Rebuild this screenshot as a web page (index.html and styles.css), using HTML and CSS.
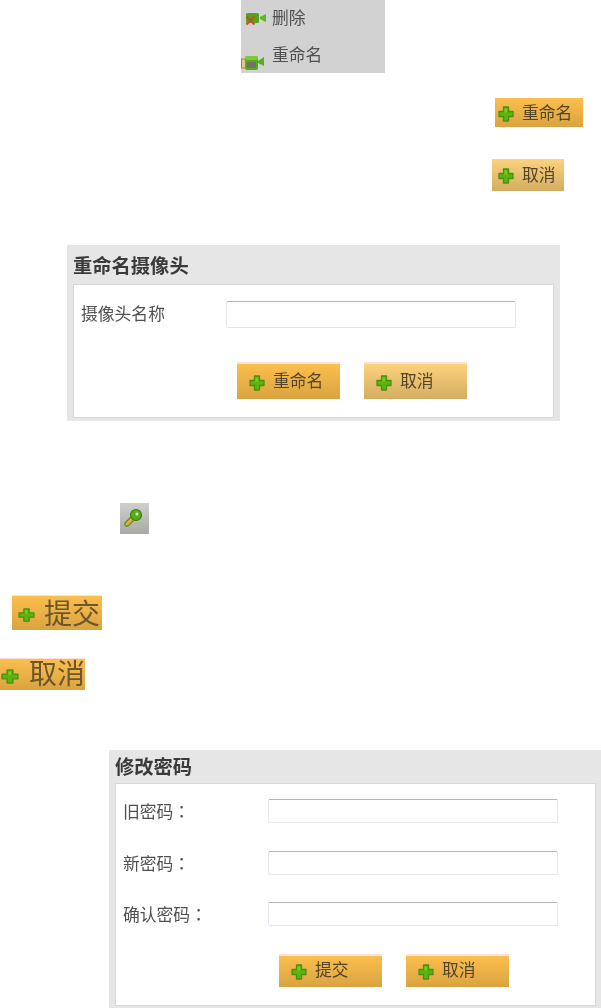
FILE: index.html
```html
<!DOCTYPE html>
<html lang="zh-CN">

<head>
  <meta charset="UTF-8">
  <title>摄像头管理</title>
  <meta name="viewport" content="width=device-width,initial-scale=1">
  <link rel="stylesheet" href="styles.css">
</head>

<body>
  <svg class="defs" width="0" height="0">
    <symbol id="plus" viewBox="0 0 16 16" preserveAspectRatio="none">
      <path d="M5.500 1h5v4.500h4.500v5h-4.500v4.500h-5v-4.500h-4.500v-5h4.500z" fill="#58b60e" stroke="#4f8f10" stroke-width="1.300" stroke-linejoin="round" />
      <path d="M6.500 2.500h2.500v4h-2.500z" fill="#74cf20" />
    </symbol>
  </svg>

  <div class="menu">
    <div class="menu-item">
      <svg class="cam-del" viewBox="0 0 22 15">
        <rect x="1" y="2" width="13" height="10" rx="1.500" fill="#4fa61a" />
        <path d="M15 6l6-3v8l-6-3z" fill="#5cb820" />
        <path d="M1.500 5.500l8 8M9.500 5.500l-8 8" stroke="#d8452c" stroke-width="2.200" />
      </svg>
      <span>删除</span>
    </div>
    <div class="menu-item second">
      <svg class="cam-edit" viewBox="0 0 24 19">
        <rect x="0.500" y="7" width="9" height="9" fill="#e8c48a" stroke="#a9813f" />
        <rect x="4" y="4" width="13" height="14" rx="2" fill="#55aa1e" />
        <rect x="4" y="4" width="13" height="4" rx="2" fill="#7ccb38" />
        <rect x="6" y="10" width="9" height="6" fill="#6f7468" />
        <path d="M17 9l6-4v9l-6-3z" fill="#55b01c" />
      </svg>
      <span>重命名</span>
    </div>
  </div>

  <div class="btn-row top-a">
    <a class="btn small warm"><svg class="plus"><use href="#plus" /></svg>重命名</a>
  </div>
  <div class="btn-row top-b">
    <a class="btn small pale"><svg class="plus"><use href="#plus" /></svg>取消</a>
  </div>

  <section class="panel rename">
    <h2>重命名摄像头</h2>
    <div class="panel-body">
      <div class="field">
        <label>摄像头名称</label>
        <input type="text">
      </div>
      <div class="actions">
        <a class="btn warm"><svg class="plus"><use href="#plus" /></svg>重命名</a>
        <a class="btn pale"><svg class="plus"><use href="#plus" /></svg>取消</a>
      </div>
    </div>
  </section>

  <div class="key">
    <svg viewBox="0 0 29 31">
      <path d="M14 14L7 21" stroke="#4d9a12" stroke-width="5.500" stroke-linecap="round" />
      <path d="M14 14L7 21" stroke="#eda84a" stroke-width="3" stroke-linecap="round" />
      <circle cx="16" cy="12" r="5.500" fill="#57ad16" stroke="#3c7f0c" stroke-width="1.200" />
      <circle cx="17" cy="11" r="1.500" fill="#dfe8d0" />
    </svg>
  </div>

  <a class="btn big warm submit"><svg class="plus"><use href="#plus" /></svg>提交</a>
  <a class="btn big warm cancel"><svg class="plus"><use href="#plus" /></svg>取消</a>

  <section class="panel password">
    <h2>修改密码</h2>
    <div class="panel-body">
      <div class="field">
        <label>旧密码<span class="colon" lang="zh-TW">：</span></label>
        <input type="password">
      </div>
      <div class="field">
        <label>新密码<span class="colon" lang="zh-TW">：</span></label>
        <input type="password">
      </div>
      <div class="field">
        <label>确认密码<span class="colon" lang="zh-TW">：</span></label>
        <input type="password">
      </div>
      <div class="actions">
        <a class="btn warm"><svg class="plus"><use href="#plus" /></svg>提交</a>
        <a class="btn warm"><svg class="plus"><use href="#plus" /></svg>取消</a>
      </div>
    </div>
  </section>
</body>

</html>
```

FILE: styles.css
```css
* {
  box-sizing: border-box;
  margin: 0;
  padding: 0;
  font-family: "Liberation Sans", "Noto Sans CJK SC", sans-serif
}

:root {
  --panel: #e6e6e6;
  --line: #d8d8d8;
  --text: #505050;
  --title: #3a3a3a
}

body {
  background: #fff;
  color: var(--text);
  width: 601px;
  height: 1008px;
  overflow: hidden;
  filter: blur(.5px)
}

.defs {
  display: block
}

.menu {
  width: 144px;
  height: 73px;
  margin-left: 241px;
  background: #d2d2d2;
  font-size: 16.800px;
  line-height: 22px
}

.menu-item {
  display: flex;
  align-items: center;
  height: 37px;
  padding-left: 4px
}

.menu-item span {
  margin-left: 5px
}

.menu-item.second {
  height: 36px;
  padding-left: 0
}

.menu-item.second span {
  margin-left: 7px;
  margin-top: 2px
}

.cam-del {
  width: 22px;
  height: 15px
}

.cam-edit {
  width: 24px;
  height: 19px;
  margin-top: 13px
}

.btn {
  display: flex;
  align-items: center;
  width: 103px;
  height: 37px;
  padding: 0 0 4px 12px;
  color: #54442a;
  font-size: 16.800px;
  white-space: nowrap;
  border-top: 2px solid #fde0d8;
  background: linear-gradient(#fbbf4e, #d9a340)
}

.btn.pale {
  background: linear-gradient(#fcd27c, #d4ad62)
}

.btn .plus {
  width: 16px;
  height: 16px;
  margin-right: 8px;
  margin-top: 6px;
  flex: none
}

.btn-row {
  display: flex
}

.btn.small {
  height: 29px;
  border-top: 0;
  padding-left: 3px;
  padding-bottom: 2px;
  margin-left: auto
}

.btn.small .plus {
  margin-top: 4px
}

.top-a {
  margin-top: 25px;
  padding-right: 18px
}

.top-a .btn {
  width: 88px
}

.top-b {
  margin-top: 32px;
  padding-right: 37px
}

.top-b .btn {
  width: 72px;
  height: 32px;
  padding-left: 6px
}

.panel {
  background: var(--panel);
  padding: 0 6px 3px
}

.panel h2 {
  color: var(--title);
  font-size: 19.300px;
  font-weight: 700;
  line-height: 24px;
  padding-top: 10px;
  height: 39px
}

.panel-body {
  background: #fff;
  border: 1px solid var(--line);
  padding: 16px 0 0 7px
}

.field {
  display: flex;
  align-items: center;
  font-size: 16.800px;
  line-height: 20px
}

.field label {
  width: 145px;
  height: 20px;
  flex: none
}

.colon {
  font-family: "Noto Sans CJK TC", sans-serif
}

.field input {
  width: 290px;
  height: 27px;
  border: 1px solid #e4e6ee;
  border-top-color: #b4b4b8;
  border-radius: 2px;
  background: #fff
}

.actions {
  display: flex;
  gap: 24px
}

.rename {
  width: 493px;
  height: 176px;
  margin: 54px 0 0 67px
}

.rename .panel-body {
  height: 134px
}

.rename .actions {
  margin: 34px 0 0 156px
}

.key {
  width: 29px;
  height: 31px;
  margin: 82px 0 0 120px;
  background: linear-gradient(#cfcfcd, #a8a8a4)
}

.key svg {
  display: block;
  width: 29px;
  height: 31px
}

.btn.big {
  height: 35px;
  font-size: 28px;
  line-height: 1;
  color: #6b5630;
  padding: 4px 0 0 6px;
  border-top: 1px solid #fde0d8
}

.btn.big .plus {
  width: 17px;
  height: 14px;
  margin-top: 0;
  margin-right: 9px
}

.btn.big.submit {
  width: 90px;
  margin: 61px 0 0 12px
}

.btn.big.cancel {
  width: 85px;
  height: 32px;
  margin-top: 28px;
  padding: 0 0 0 1px
}

.btn.big.cancel .plus {
  width: 18px;
  height: 15px;
  margin-top: 4px;
  margin-right: 10px
}

.password {
  width: 492px;
  height: 258px;
  margin: 60px 0 0 109px;
  padding-right: 5px
}

.password h2 {
  padding-top: 6px;
  height: 33px
}

.password .panel-body {
  height: 223px;
  padding-top: 15px
}

.password .field {
  margin-bottom: 27.500px
}

.password .field input {
  height: 24px
}

.password .actions {
  margin: 2.500px 0 0 156px
}

.password .btn {
  height: 33px
}
```
